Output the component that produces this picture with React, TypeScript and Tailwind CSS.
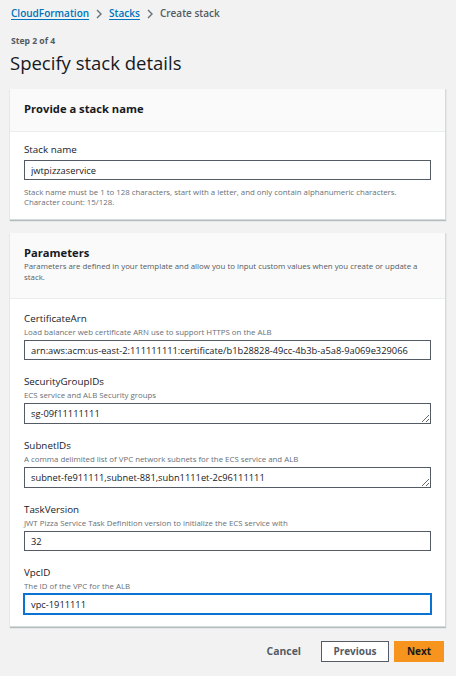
import type { ReactNode } from 'react'

const font = { fontFamily: '"Open Sans", "Liberation Sans", Arial, sans-serif' }

function Card({ children }: { children: ReactNode }) {
  return (
    <div className="mx-[10px] border-r border-b border-[#d5dbdb] bg-white shadow-[0_1px_1px_rgba(0,28,36,0.25)]">
      {children}
    </div>
  )
}

function CardHeader({ title, desc }: { title: string; desc?: string }) {
  return (
    <div className="border-b border-[#eaeded] bg-[#fafafa] px-[14px] pt-[12px] pb-[15px]">
      <h2 className="text-[11.2px] leading-[15px] font-bold text-[#16191f]">{title}</h2>
      {desc && (
        <p className="mt-[1px] pr-[8px] text-[7.85px] leading-[11px] text-[#545b64]">{desc}</p>
      )}
    </div>
  )
}

function Field({
  label,
  desc,
  value,
  multi,
  focused,
}: {
  label: string
  desc: string
  value: string
  multi?: boolean
  focused?: boolean
}) {
  const box = focused
    ? 'border-[#0972d3] shadow-[0_0_0_1px_#0972d3]'
    : 'border-[#545b64]'
  return (
    <div>
      <div className="text-[9.8px] leading-[12px] text-[#16191f]">{label}</div>
      <div className="mt-[2px] text-[7.85px] leading-[10px] text-[#687078]">{desc}</div>
      {multi ? (
        <textarea
          readOnly
          value={value}
          rows={1}
          className={`mt-[3px] block h-[21px] w-full resize-y overflow-hidden border bg-white px-[6px] pt-[3px] text-[9.3px] leading-[13px] text-[#16191f] outline-none ${box}`}
        />
      ) : (
        <input
          readOnly
          value={value}
          className={`mt-[3px] block h-[20px] w-full border bg-white px-[6px] text-[9.3px] text-[#16191f] outline-none ${box}`}
        />
      )}
    </div>
  )
}

export default function App() {
  return (
    <div className="min-h-[676px] bg-[#f1f2f1] pb-4" style={font}>
      <nav className="flex items-center px-[11px] pt-[7px] text-[10px] leading-[13px] font-semibold">
        <a href="#" className="text-[#0073bb] underline underline-offset-2">
          CloudFormation
        </a>
        <svg width="12" height="12" viewBox="0 0 12 12" className="mx-[4px] text-[#687078]">
          <path d="M4 2l4 4-4 4" fill="none" stroke="currentColor" strokeWidth="1.4" />
        </svg>
        <a href="#" className="text-[#0073bb] underline underline-offset-2">
          Stacks
        </a>
        <svg width="12" height="12" viewBox="0 0 12 12" className="mx-[4px] text-[#687078]">
          <path d="M4 2l4 4-4 4" fill="none" stroke="currentColor" strokeWidth="1.4" />
        </svg>
        <span className="text-[#545b64]">Create stack</span>
      </nav>

      <div className="px-[11px] pt-[16px] text-[8.6px] leading-[11px] font-bold text-[#545b64]">
        Step 2 of 4
      </div>
      <h1 className="px-[10px] pt-[4px] text-[18.5px] leading-[24px] text-[#16191f]">
        Specify stack details
      </h1>

      <div className="mt-[14px]">
        <Card>
          <CardHeader title="Provide a stack name" />
          <div className="px-[14px] pt-[12px] pb-[12px]">
            <div className="text-[9.8px] leading-[12px] text-[#16191f]">Stack name</div>
            <input
              readOnly
              value="jwtpizzaservice"
              className="mt-[4px] block h-[20px] w-full border border-[#545b64] bg-white px-[6px] text-[9.3px] text-[#16191f] outline-none"
            />
            <p className="mt-[7px] text-[7.85px] leading-[10px] text-[#687078]">
              Stack name must be 1 to 128 characters, start with a letter, and only contain
              alphanumeric characters.
              <br />
              Character count: 15/128.
            </p>
          </div>
        </Card>
      </div>

      <div className="mt-[13px]">
        <Card>
          <CardHeader
            title="Parameters"
            desc="Parameters are defined in your template and allow you to input custom values when you create or update a stack."
          />
          <div className="flex flex-col gap-[16px] px-[14px] pt-[14px] pb-[12px]">
            <Field
              label="CertificateArn"
              desc="Load balancer web certificate ARN use to support HTTPS on the ALB"
              value="arn:aws:acm:us-east-2:111111111:certificate/b1b28828-49cc-4b3b-a5a8-9a069e329066"
            />
            <Field
              label="SecurityGroupIDs"
              desc="ECS service and ALB Security groups"
              value="sg-09f11111111"
              multi
            />
            <Field
              label="SubnetIDs"
              desc="A comma delimited list of VPC network subnets for the ECS service and ALB"
              value="subnet-fe911111,subnet-881,subn1111et-2c96111111"
              multi
            />
            <Field
              label="TaskVersion"
              desc="JWT Pizza Service Task Definition version to initialize the ECS service with"
              value="32"
            />
            <Field
              label="VpcID"
              desc="The ID of the VPC for the ALB"
              value="vpc-1911111"
              focused
            />
          </div>
        </Card>
      </div>

      <div className="mt-[14px] flex items-center justify-end gap-[5px] px-[12px]">
        <button className="mr-[15px] text-[10.4px] font-bold text-[#545b64]">Cancel</button>
        <button className="h-[21px] w-[68px] border border-[#545b64] bg-white text-[10px] font-bold text-[#545b64]">
          Previous
        </button>
        <button className="h-[21px] w-[50px] bg-[#f7941d] text-[10px] font-bold text-[#16191f]">
          Next
        </button>
      </div>
    </div>
  )
}
